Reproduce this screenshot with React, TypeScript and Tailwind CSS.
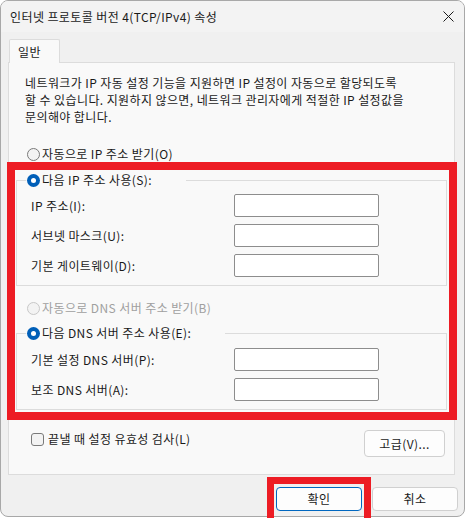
import { ReactNode } from "react";

const font = { fontFamily: '"Noto Sans CJK KR", "Noto Sans", sans-serif' };

function Radio({ checked, disabled }: { checked?: boolean; disabled?: boolean }) {
  if (checked) {
    return (
      <span className="w-[13px] h-[13px] rounded-full bg-[#005fb8] flex items-center justify-center shrink-0">
        <span className="w-[5px] h-[5px] rounded-full bg-white" />
      </span>
    );
  }
  return (
    <span
      className={`w-[13px] h-[13px] rounded-full border shrink-0 bg-[#f3f3f3] ${
        disabled ? "border-[#c8c8c8]" : "border-[#7a7a7a]"
      }`}
    />
  );
}

function Field({ label }: { label: string }) {
  return (
    <div className="flex items-center h-[23px]">
      <span className="w-[217px] pl-[14px] text-[12px] text-[#1a1a1a]">{label}</span>
      <div className="w-[145px] h-[23px] bg-white border border-[#8d8d8d] rounded-[2px]" />
    </div>
  );
}

function Group({ legend, children }: { legend: string; children: ReactNode }) {
  return (
    <div className="mx-[7px] border border-[#dcdcdc]">
      <div className="-mt-[11px] h-[20px] flex">
        <div className="ml-[9px] pl-[1px] pr-[34px] bg-[#f9f9f9] flex items-center gap-[2px]">
          <Radio checked />
          <span className="text-[12px] text-[#1a1a1a]">{legend}</span>
        </div>
      </div>
      {children}
    </div>
  );
}

function Btn({ children, primary }: { children: ReactNode; primary?: boolean }) {
  return (
    <div
      className={`w-[86px] h-[24px] rounded-[4px] bg-[#fdfdfd] flex items-center justify-center text-[12px] text-[#1a1a1a] border ${
        primary ? "border-[#0067c0]" : "border-[#d0d0d0]"
      }`}
    >
      {children}
    </div>
  );
}

export default function App() {
  return (
    <div className="relative w-[465px] h-[518px] overflow-hidden bg-white tracking-[0.4px]" style={font}>
      <div className="w-[465px] h-[517px] rounded-[8px] border border-[#a8a8a8] bg-[#f0f0f0] overflow-hidden flex flex-col">
        {/* title bar */}
        <div className="h-[31px] flex items-center justify-between pl-[9px] pr-[9px] bg-[#f3f3f3]">
          <span className="text-[12px] text-[#1a1a1a]">인터넷 프로토콜 버전 4(TCP/IPv4) 속성</span>
          <svg width="11" height="11" viewBox="0 0 11 11" className="mr-[1px]">
            <path d="M0.5 0.5 L10.5 10.5 M10.5 0.5 L0.5 10.5" stroke="#1a1a1a" strokeWidth="1" />
          </svg>
        </div>

        <div className="pl-[7px] pr-[9px] pt-[7px]">
          {/* tab */}
          <div className="flex">
            <div className="ml-[1px] w-[51px] h-[24px] border border-b-0 border-[#dcdcdc] bg-[#f9f9f9] rounded-t-[2px] flex items-center pl-[8px] text-[12px] text-[#1a1a1a] -mb-[1px] relative z-10">
              일반
            </div>
          </div>

          {/* panel */}
          <div className="h-[413px] border border-[#dcdcdc] bg-[#f9f9f9] flex flex-col">
            <p className="pt-[11px] pl-[16px] pr-[4px] text-[12px] leading-[17px] text-[#1a1a1a] whitespace-nowrap">
              네트워크가 IP 자동 설정 기능을 지원하면 IP 설정이 자동으로 할당되도록
              <br />할 수 있습니다. 지원하지 않으면, 네트워크 관리자에게 적절한 IP 설정값을
              <br />문의해야 합니다.
            </p>

            <div className="mt-[19px] ml-[18px] h-[20px] flex items-center gap-[2px]">
              <Radio />
              <span className="text-[12px] text-[#1a1a1a]">자동으로 IP 주소 받기(O)</span>
            </div>

            <div className="mt-[16px]">
              <Group legend="다음 IP 주소 사용(S):">
                <div className="mt-[4px] pb-[8px] flex flex-col gap-[7px]">
                  <Field label="IP 주소(I):" />
                  <Field label="서브넷 마스크(U):" />
                  <Field label="기본 게이트웨이(D):" />
                </div>
              </Group>
            </div>

            <div className="mt-[12px] ml-[18px] h-[20px] flex items-center gap-[2px]">
              <Radio disabled />
              <span className="text-[12px] text-[#a0a0a0]">자동으로 DNS 서버 주소 받기(B)</span>
            </div>

            <div className="mt-[15px]">
              <Group legend="다음 DNS 서버 주소 사용(E):">
                <div className="mt-[5px] pb-[8px] flex flex-col gap-[7px]">
                  <Field label="기본 설정 DNS 서버(P):" />
                  <Field label="보조 DNS 서버(A):" />
                </div>
              </Group>
            </div>

            <div className="mt-[20px] flex items-start justify-between pl-[22px] pr-[9px]">
              <div className="flex items-center gap-[4px] h-[18px]">
                <span className="w-[13px] h-[13px] rounded-[3px] border border-[#7a7a7a] bg-[#f3f3f3]" />
                <span className="text-[12px] text-[#1a1a1a]">끝낼 때 설정 유효성 검사(L)</span>
              </div>
              <div className="w-[81px] h-[27px] rounded-[4px] bg-[#fdfdfd] border border-[#d0d0d0] flex items-center justify-center text-[12px] text-[#1a1a1a]">
                고급(V)...
              </div>
            </div>
          </div>
        </div>

        {/* bottom buttons */}
        <div className="mt-[12px] flex justify-end gap-[10px] pr-[6px]">
          <Btn primary>확인</Btn>
          <Btn>취소</Btn>
        </div>
      </div>

      {/* red annotation boxes */}
      <div className="absolute left-[7px] top-[162px] w-[450px] h-[258px] border-[8px] border-[#ed1c24]" />
      <div className="absolute left-[267px] top-[477px] w-[104px] h-[50px] border-[7px] border-[#ed1c24]" />
    </div>
  );
}
